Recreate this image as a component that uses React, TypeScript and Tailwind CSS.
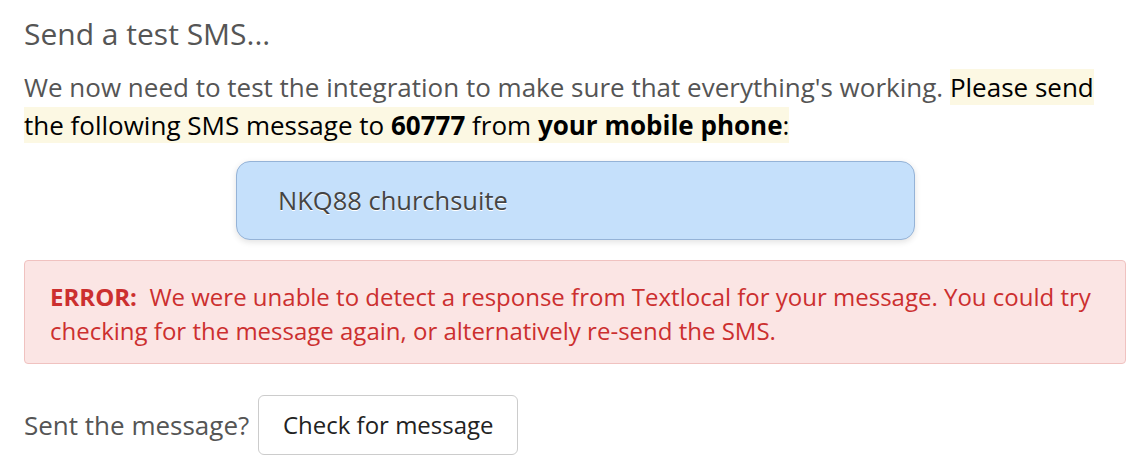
export default function App() {
  return (
    <div className="w-[1136px] h-[472px] bg-white pl-6 pr-[10px] pt-[14px] font-['Open_Sans',sans-serif] text-[#555]">
      <h2 className="text-[30px] leading-[40px]">Send a test SMS...</h2>
      <p className="mt-[14px] text-[26px] leading-[38px]">
        We now need to test the integration to make sure that everything's working.{" "}
        <span className="bg-[#fcf8e3] text-black [box-decoration-break:clone]">
          Please send the following SMS message to <b>60777</b> from <b>your mobile phone</b>:
        </span>
      </p>
      <div className="ml-[212px] mt-[17px] w-[679px] h-[79px] rounded-[14px] border border-[#95b3d7] bg-[#c5e0fb] shadow-[0_2px_6px_rgba(0,0,0,0.12)] flex items-center pl-[41px] text-[25.5px] text-[#444] [text-shadow:0_1px_0_#fff]">
        NKQ88 churchsuite
      </div>
      <div className="mt-[20px] rounded-[4px] border border-[#f0c2c0] bg-[#fbe5e4] px-[25px] pt-[19px] pb-[15px] text-[24px] leading-[34px] text-[#cc2f2f]">
        <b>ERROR:</b>&nbsp; We were unable to detect a response from Textlocal for your message. You could try checking for the message again, or alternatively re-send the SMS.
      </div>
      <div className="mt-[31px] flex items-center gap-[9px] text-[26px]">
        <span>Sent the message?</span>
        <button className="h-[60px] w-[260px] rounded-[6px] border border-[#ccc] bg-white text-[24px] text-[#222]">
          Check for message
        </button>
      </div>
    </div>
  );
}
